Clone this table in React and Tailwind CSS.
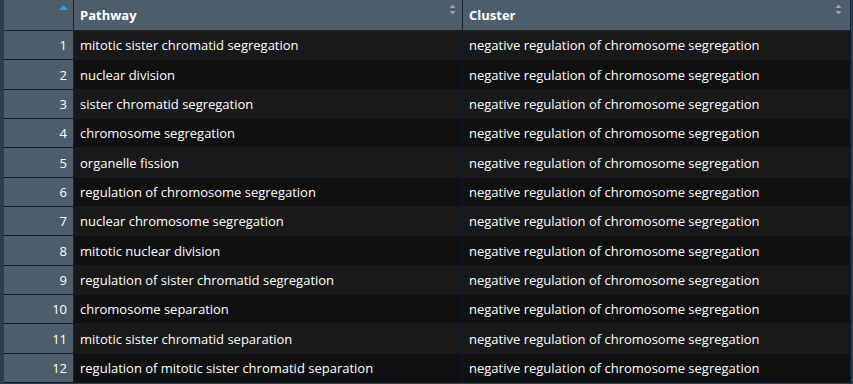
import React from 'react';

const rows = [
  'mitotic sister chromatid segregation',
  'nuclear division',
  'sister chromatid segregation',
  'chromosome segregation',
  'organelle fission',
  'regulation of chromosome segregation',
  'nuclear chromosome segregation',
  'mitotic nuclear division',
  'regulation of sister chromatid segregation',
  'chromosome separation',
  'mitotic sister chromatid separation',
  'regulation of mitotic sister chromatid separation',
];

const SortBoth = () => (
  <svg width="7" height="11" viewBox="0 0 7 11" className="shrink-0">
    <path d="M3.5 0.5 L6.5 4 L0.5 4 Z" fill="#9aa3ab" />
    <path d="M3.5 10.5 L6.5 7 L0.5 7 Z" fill="#9aa3ab" />
  </svg>
);

const SortUp = () => (
  <svg width="9" height="5" viewBox="0 0 9 5">
    <path d="M4.5 0 L9 5 L0 5 Z" fill="#2a9fd6" />
  </svg>
);

export default function App() {
  return (
    <div
      className="w-[853px] h-[384px] overflow-hidden bg-[#2b3e50] pl-[4px] pr-[2px] text-white text-[13px]"
      style={{ fontFamily: '"Open Sans", "Noto Sans", sans-serif' }}
    >
      <div className="flex h-[31px] bg-[#4e5d6c] border-b border-[#172533]">
        <div className="w-[70px] border-r border-[#172533] flex justify-end items-start pt-[5px] pr-[5px]">
          <SortUp />
        </div>
        <div className="w-[389px] border-r border-[#172533] flex items-start justify-between pl-[6px] pr-[6px]">
          <span className="font-bold leading-[30px]">Pathway</span>
          <div className="pt-[4px]"><SortBoth /></div>
        </div>
        <div className="flex-1 border-r border-[#172533] flex items-start justify-between pl-[6px] pr-[8px]">
          <span className="font-bold leading-[30px]">Cluster</span>
          <div className="pt-[4px]"><SortBoth /></div>
        </div>
      </div>
      {rows.map((name, i) => (
        <div
          key={i}
          className={`flex h-[29.33px] border-b border-[#0e1c2a] ${i % 2 === 0 ? 'bg-[#191919]' : 'bg-[#101010]'}`}
        >
          <div className="w-[70px] bg-[#4e5d6c] border-r border-[#172533] flex items-center justify-end pr-[6px] pt-[2px]">
            {i + 1}
          </div>
          <div className="w-[389px] border-r border-[#0e1c2a] flex items-center pl-[6px] pt-[2px] whitespace-nowrap">
            {name}
          </div>
          <div className="flex-1 border-r border-[#0e1c2a] flex items-center pl-[6px] pt-[2px] whitespace-nowrap">
            negative regulation of chromosome segregation
          </div>
        </div>
      ))}
    </div>
  );
}
